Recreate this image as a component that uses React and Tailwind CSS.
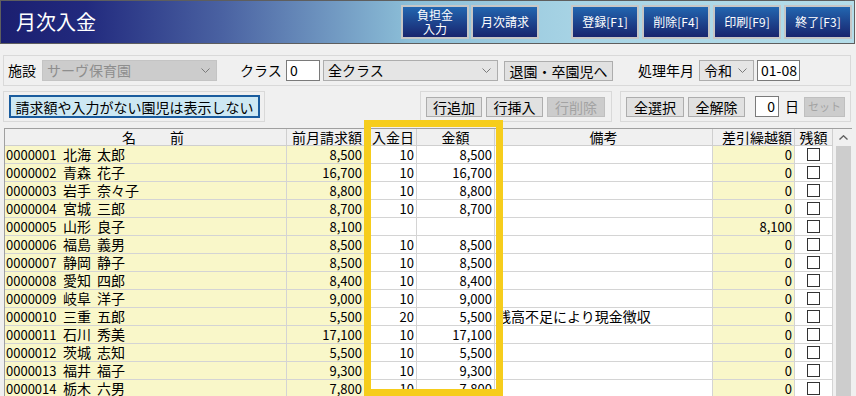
import React from 'react';

const FONT = { fontFamily: '"Noto Sans CJK JP", "Noto Sans", sans-serif' };

const rows = [
  ['0000001', '北海', '太郎', '8,500', '10', '8,500', '', '0'],
  ['0000002', '青森', '花子', '16,700', '10', '16,700', '', '0'],
  ['0000003', '岩手', '奈々子', '8,800', '10', '8,800', '', '0'],
  ['0000004', '宮城', '三郎', '8,700', '10', '8,700', '', '0'],
  ['0000005', '山形', '良子', '8,100', '', '', '', '8,100'],
  ['0000006', '福島', '義男', '8,500', '10', '8,500', '', '0'],
  ['0000007', '静岡', '静子', '8,500', '10', '8,500', '', '0'],
  ['0000008', '愛知', '四郎', '8,400', '10', '8,400', '', '0'],
  ['0000009', '岐阜', '洋子', '9,000', '10', '9,000', '', '0'],
  ['0000010', '三重', '五郎', '5,500', '20', '5,500', '残高不足により現金徴収', '0'],
  ['0000011', '石川', '秀美', '17,100', '10', '17,100', '', '0'],
  ['0000012', '茨城', '志知', '5,500', '10', '5,500', '', '0'],
  ['0000013', '福井', '福子', '9,300', '10', '9,300', '', '0'],
  ['0000014', '栃木', '六男', '7,800', '10', '7,800', '', '0'],
];

const Chevron = () => (
  <svg width="9" height="5" viewBox="0 0 9 5" className="shrink-0">
    <path d="M0.5 0.5 L4.5 4.5 L8.5 0.5" fill="none" stroke="#7a7a7a" strokeWidth="1" />
  </svg>
);

function HeadButton({ children }) {
  return (
    <button className="h-[34px] w-[68px] border-2 border-[#c6c6c6] bg-gradient-to-b from-[#2266b0] to-[#18246e] text-white text-[12px] leading-[14px] flex flex-col items-center justify-center">
      {children}
    </button>
  );
}

function Btn({ children, w, disabled }) {
  return (
    <button
      className={`h-[20px] ${w} border text-[14px] leading-none flex items-center justify-center ${
        disabled ? 'bg-[#cccccc] border-[#bfbfbf] text-[#a3a3a3]' : 'bg-[#e1e1e1] border-[#adadad] text-black'
      }`}
    >
      {children}
    </button>
  );
}

function Select({ w, value, disabled }) {
  return (
    <div
      className={`${w} h-[21px] border flex items-center justify-between pl-[4px] pr-[6px] text-[14px] ${
        disabled ? 'bg-[#cccccc] border-[#c4c4c4] text-[#8e8e8e]' : 'bg-[#e5e5e5] border-[#adadad] text-black'
      }`}
    >
      <span>{value}</span>
      <Chevron />
    </div>
  );
}

export default function App() {
  return (
    <div className="relative w-[856px] h-[396px] overflow-hidden bg-[#f0f0f0] text-black" style={FONT}>
      <header className="w-[855px] h-[44px] border border-[#5e5e5e] bg-[linear-gradient(to_right,#1b1f70_0%,#222a7e_10%,#4a62a2_26%,#8cbfd8_48%,#a8d4e5_68%,#b4dde9_100%)] flex items-center pl-[15px] pr-[2px]">
        <h1 className="text-white text-[20px]">月次入金</h1>
        <div className="ml-auto flex items-center">
          <HeadButton>
            <span>負担金</span>
            <span>入力</span>
          </HeadButton>
          <div className="ml-[2px]"><HeadButton>月次請求</HeadButton></div>
          <div className="ml-[32px] flex gap-[3px]">
            <HeadButton>登録[F1]</HeadButton>
            <HeadButton>削除[F4]</HeadButton>
            <HeadButton>印刷[F9]</HeadButton>
            <HeadButton>終了[F3]</HeadButton>
          </div>
        </div>
      </header>

      <div className="ml-[3px] mt-[11px] w-[848px] h-[31px] border border-[#d9d9d9] flex items-center pl-[4px] text-[14px]">
        <span className="w-[28px]">施設</span>
        <div className="ml-[6px]"><Select w="w-[175px]" value="サーヴ保育園" disabled /></div>
        <span className="ml-[23px] w-[44px]">クラス</span>
        <div className="ml-[2px] w-[34px] h-[21px] bg-white border border-[#7a7a7a] pl-[3px] leading-[19px]">0</div>
        <div className="ml-[3px]"><Select w="w-[175px]" value="全クラス" /></div>
        <div className="ml-[6px]"><Btn w="w-[109px]">退園・卒園児へ</Btn></div>
        <span className="ml-[25px] w-[58px]">処理年月</span>
        <div className="ml-[3px]"><Select w="w-[55px]" value="令和" /></div>
        <div className="ml-[3px] w-[43px] h-[21px] bg-white border border-[#7a7a7a] pl-[3px] leading-[19px]">01-08</div>
      </div>

      <div className="mt-[5px] flex text-[14px]">
        <div className="ml-[3px] w-[262px] h-[31px] border border-[#d9d9d9] flex items-center pl-[5px]">
          <button className="w-[251px] h-[23px] bg-[#cde8f3] border-2 border-[#1a5c9e] flex items-center justify-center leading-none">
            請求額や入力がない園児は表示しない
          </button>
        </div>
        <div className="ml-[155px] w-[192px] h-[31px] border border-[#d9d9d9] flex items-center pl-[5px] gap-[4px]">
          <Btn w="w-[56px]">行追加</Btn>
          <Btn w="w-[57px]">行挿入</Btn>
          <Btn w="w-[58px]" disabled>行削除</Btn>
        </div>
        <div className="ml-[8px] w-[231px] h-[31px] border border-[#d9d9d9] flex items-center pl-[5px]">
          <Btn w="w-[58px]">全選択</Btn>
          <div className="ml-[4px]"><Btn w="w-[57px]">全解除</Btn></div>
          <div className="ml-[10px] w-[24px] h-[21px] bg-white border border-[#7a7a7a] text-right pr-[3px] leading-[19px]">0</div>
          <span className="ml-[6px]">日</span>
          <div className="ml-[5px]"><Btn w="w-[41px]" disabled><span className="text-[11px]">セット</span></Btn></div>
        </div>
      </div>

      <div className="ml-[4px] mt-[6px] w-[848px] border-l border-t border-[#a0a0a0] flex text-[13px]">
        <div className="w-[828px]">
          <div className="grid grid-cols-[282px_78px_52px_78px_218px_82px_38px] h-[17px] bg-[#f0f0f0] border-b border-[#cfcfcf] leading-[16px] text-[14px]">
            <div className="border-r border-[#cfcfcf] pl-[117px] flex gap-[34px]"><span>名</span><span>前</span></div>
            <div className="border-r border-[#cfcfcf] text-right pr-[2px]">前月請求額</div>
            <div className="border-r border-[#cfcfcf] text-right pr-[2px]">入金日</div>
            <div className="border-r border-[#cfcfcf] text-center">金額</div>
            <div className="border-r border-[#cfcfcf] text-center">備考</div>
            <div className="border-r border-[#cfcfcf] text-right pr-[2px]">差引繰越額</div>
            <div className="border-r border-[#cfcfcf] text-center">残額</div>
          </div>
          {rows.map((r) => (
            <div key={r[0]} className="grid grid-cols-[282px_78px_52px_78px_218px_82px_38px] h-[18px] border-b border-[#d4d4d4] leading-[17px]">
              <div className="bg-[#f9f7c9] border-r border-[#d4d4d4] flex pl-[1px]">
                <span className="w-[57px]">{r[0]}</span>
                <span className="w-[34px] text-[14px]">{r[1]}</span>
                <span className="text-[14px]">{r[2]}</span>
              </div>
              <div className="bg-[#f9f7c9] border-r border-[#d4d4d4] text-right pr-[2px]">{r[3]}</div>
              <div className="bg-white border-r border-[#d4d4d4] text-right pr-[2px]">{r[4]}</div>
              <div className="bg-white border-r border-[#d4d4d4] text-right pr-[2px]">{r[5]}</div>
              <div className="bg-white border-r border-[#d4d4d4] pl-[2px] text-[14px] whitespace-nowrap overflow-hidden">{r[6]}</div>
              <div className="bg-[#f9f7c9] border-r border-[#d4d4d4] text-right pr-[2px]">{r[7]}</div>
              <div className="bg-white border-r border-[#d4d4d4] flex items-center justify-center">
                <div className="w-[13px] h-[13px] border border-[#333333] bg-white" />
              </div>
            </div>
          ))}
        </div>
        <div className="w-[18px] flex flex-col bg-[#f0f0f0] ml-[2px]">
          <div className="h-[17px] flex items-center justify-center">
            <svg width="9" height="5" viewBox="0 0 9 5">
              <path d="M0.5 4.5 L4.5 0.8 L8.5 4.5" fill="none" stroke="#606060" strokeWidth="1.4" />
            </svg>
          </div>
          <div className="flex-1 bg-[#cdcdcd] mx-[1px]" />
        </div>
      </div>

      <div className="absolute left-[364px] top-[120px] w-[139px] h-[276px] border-[7px] border-[#f6cd1c]" />
    </div>
  );
}
